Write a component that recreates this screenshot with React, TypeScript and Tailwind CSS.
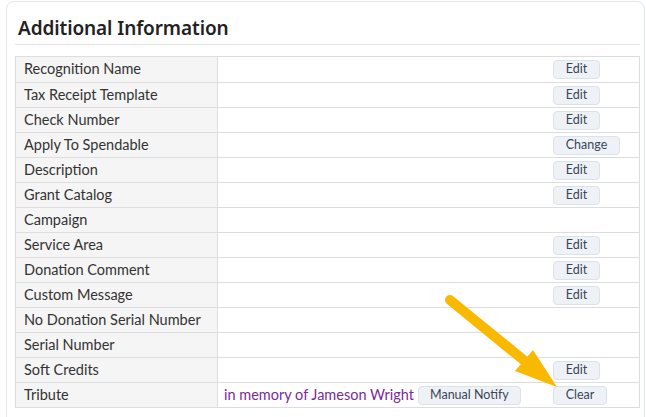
import React from "react";

type Row = { label: string; btn?: string; tribute?: boolean };

const rows: Row[] = [
  { label: "Recognition Name", btn: "Edit" },
  { label: "Tax Receipt Template", btn: "Edit" },
  { label: "Check Number", btn: "Edit" },
  { label: "Apply To Spendable", btn: "Change" },
  { label: "Description", btn: "Edit" },
  { label: "Grant Catalog", btn: "Edit" },
  { label: "Campaign" },
  { label: "Service Area", btn: "Edit" },
  { label: "Donation Comment", btn: "Edit" },
  { label: "Custom Message", btn: "Edit" },
  { label: "No Donation Serial Number" },
  { label: "Serial Number" },
  { label: "Soft Credits", btn: "Edit" },
  { label: "Tribute", btn: "Clear", tribute: true },
];

function Btn({ children, w }: { children: React.ReactNode; w: string }) {
  return (
    <button
      className={`h-[19px] ${w} rounded-[4px] border border-[#dbe2ea] bg-[#eef2f7] text-[12.5px] leading-none text-[#3a4658] flex items-center justify-center`}
    >
      {children}
    </button>
  );
}

export default function App() {
  return (
    <div
      className="w-[646px] h-[417px] overflow-hidden bg-white pl-[6px] pt-[1px]"
      style={{ fontFamily: "Lato, 'Noto Sans', sans-serif" }}
    >
      <div className="w-[639px] h-[440px] rounded-t-[8px] border border-[#e3e6eb] pl-[8px] pr-[4px]">
        <div className="h-[42px] flex items-end pl-[3px] pb-[6px]">
          <h2
            className="text-[19px] font-semibold text-[#222] leading-none tracking-[-0.1px]"
            style={{ fontFamily: "'Noto Sans', sans-serif" }}
          >
            Additional Information
          </h2>
        </div>
        <div className="h-[2px] border-t border-[#e2e5ea]" />
        <div className="mt-[10px] border border-[#dddddd] w-[625px]">
          {rows.map((r, i) => (
            <div
              key={r.label}
              className={`flex h-[25px] ${i > 0 ? "border-t border-[#dddddd]" : "h-[24px]"}`}
            >
              <div className="w-[202px] shrink-0 bg-[#f5f5f5] border-r border-[#dddddd] pl-[8px] pb-[1px] flex items-center text-[14.5px] text-[#333]">
                {r.label}
              </div>
              <div className="flex-1 flex items-center">
                <div className="flex-1 flex items-center pl-[6px]">
                  {r.tribute && (
                    <>
                      <span className="text-[14.5px] text-[#7a2b96] pb-[1px]">
                        in memory of Jameson Wright
                      </span>
                      <div className="ml-[4px]">
                        <Btn w="w-[103px]">Manual Notify</Btn>
                      </div>
                    </>
                  )}
                </div>
                <div className="w-[86px] shrink-0 flex items-center">
                  {r.btn && (
                    <Btn
                      w={
                        r.btn === "Change"
                          ? "w-[67px]"
                          : r.btn === "Clear"
                          ? "w-[54px]"
                          : "w-[47px]"
                      }
                    >
                      {r.btn}
                    </Btn>
                  )}
                </div>
              </div>
            </div>
          ))}
        </div>
      </div>
      <svg
        className="absolute left-0 top-0 pointer-events-none"
        width="646"
        height="417"
        viewBox="0 0 646 417"
      >
        <line
          x1="450"
          y1="300"
          x2="526"
          y2="362"
          stroke="#f8b900"
          strokeWidth="10"
          strokeLinecap="round"
        />
        <polygon points="515,371 533,350 557,387" fill="#f8b900" />
      </svg>
    </div>
  );
}
